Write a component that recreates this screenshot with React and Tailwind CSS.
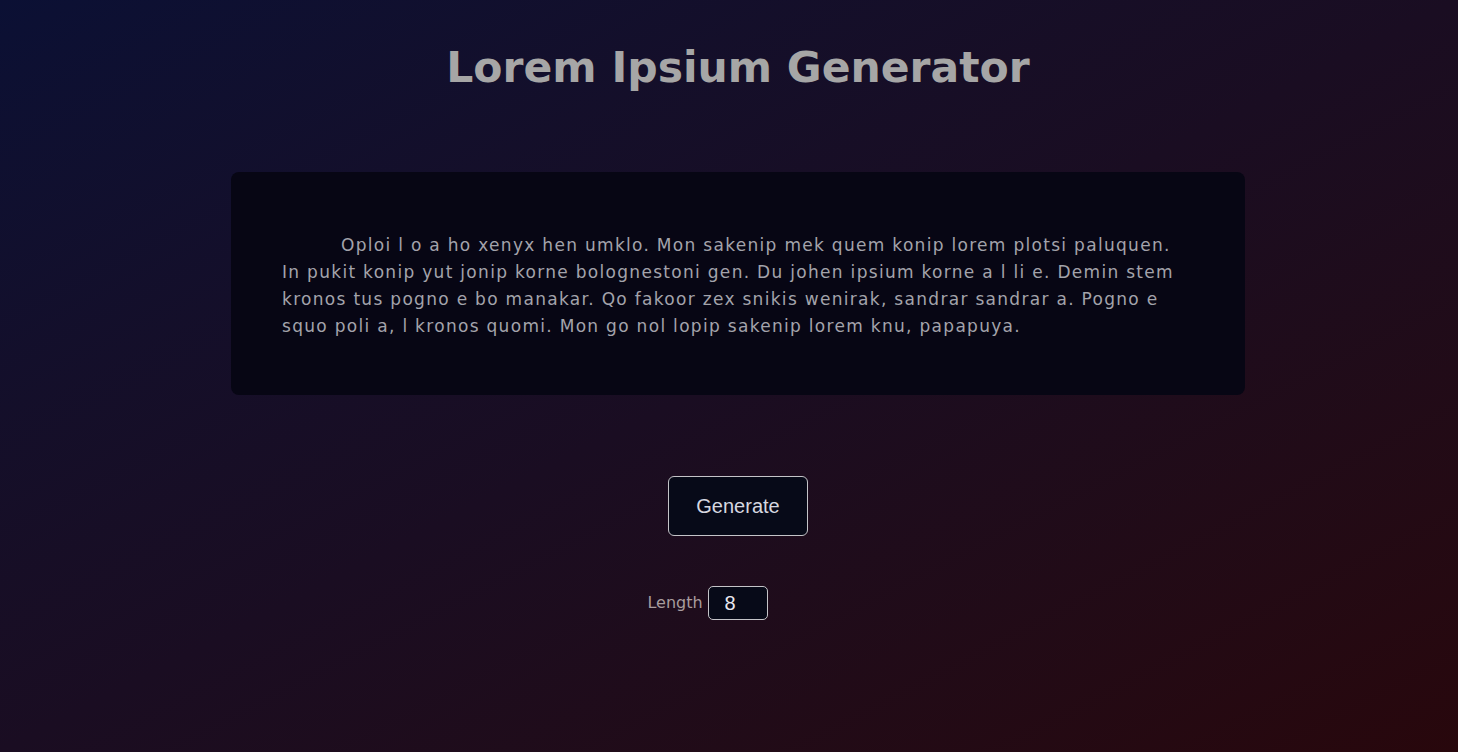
import { useState } from 'react';

const TEXT =
    'Oploi l o a ho xenyx hen umklo. Mon sakenip mek quem konip lorem plotsi paluquen. In pukit konip yut jonip korne bolognestoni gen. Du johen ipsium korne a l li e. Demin stem kronos tus pogno e bo manakar. Qo fakoor zex snikis wenirak, sandrar sandrar a. Pogno e squo poli a, l kronos quomi. Mon go nol lopip sakenip lorem knu, papapuya.';

export default function App() {
    const [length, setLength] = useState(8);

    return (
        <div className="min-h-screen w-full pl-[18px] bg-gradient-to-br from-[#0b1034] via-[#1a0d22] to-[#28070c] flex flex-col items-center font-['DejaVu_Sans',sans-serif]">
            {/* Title */}
            <h1 className="mt-[40px] text-[42.5px] leading-[56px] font-bold text-[#a6a6a6]">
                Lorem Ipsium Generator
            </h1>

            {/* Output */}
            <div className="mt-[76px] w-[1014px] h-[223px] rounded-lg bg-[#070614] px-[51px] pt-[60px] pb-[56px]">
                <p className="indent-[59px] text-[17px] leading-[27px] tracking-[1.3px] text-[#a3a3ab]">
                    {TEXT}
                </p>
            </div>

            {/* Controls */}
            <button className="mt-[81px] w-[140px] h-[60px] rounded-md border border-[#c4c4c8] bg-[#070a18] text-[20px] text-[#d6d8e0] font-['Liberation_Sans',sans-serif]">
                Generate
            </button>

            <div className="mt-[50px] mr-[61px] flex items-center gap-[5px]">
                <label className="text-[16px] text-[#a89c9e]">Length</label>
                <input
                    type="number"
                    value={length}
                    onChange={(e) => setLength(e.target.value)}
                    className="w-[60px] h-[34px] rounded-[5px] border border-[#c4c4c8] bg-[#070a18] pl-[16px] text-[20px] text-[#e8e8f0] font-['Liberation_Sans',sans-serif] outline-none [appearance:textfield] [&::-webkit-inner-spin-button]:appearance-none"
                />
            </div>
        </div>
    );
}
